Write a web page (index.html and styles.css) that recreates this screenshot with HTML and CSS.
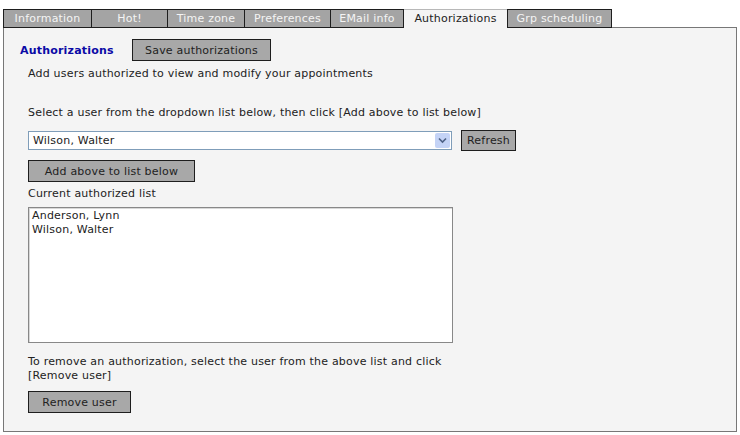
FILE: index.html
```
<!DOCTYPE html>
<html lang="en">
<head>
    <meta charset="UTF-8">
    <title>Authorizations</title>
    <link rel="stylesheet" href="styles.css">
</head>
<body>
    <!-- Tab strip -->
    <div class="tabs">
        <div class="tab tab-info">Information</div>
        <div class="tab tab-hot">Hot!</div>
        <div class="tab tab-tz">Time zone</div>
        <div class="tab tab-pref">Preferences</div>
        <div class="tab tab-mail">EMail info</div>
        <div class="tab tab-auth active">Authorizations</div>
        <div class="tab tab-grp">Grp scheduling</div>
    </div>

    <!-- Authorizations panel -->
    <div class="panel">
        <div class="head-row">
            <h2 class="title">Authorizations</h2>
            <button class="btn btn-save">Save authorizations</button>
        </div>
        <div class="body">
            <p class="intro">Add users authorized to view and modify your appointments</p>
            <p class="hint">Select a user from the dropdown list below, then click [Add above to list below]</p>

            <div class="select-row">
                <div class="select">
                    <span class="select-value">Wilson, Walter</span>
                    <span class="select-arrow">
                        <svg width="9" height="7" viewBox="0 0 9 7"><path d="M1 1.5 L4.5 5 L8 1.5" fill="none" stroke="#4d6185" stroke-width="1.6"/></svg>
                    </span>
                </div>
                <button class="btn btn-refresh">Refresh</button>
            </div>

            <button class="btn btn-add">Add above to list below</button>

            <p class="label">Current authorized list</p>
            <div class="listbox">
                <div class="list-item">Anderson, Lynn</div>
                <div class="list-item">Wilson, Walter</div>
            </div>

            <p class="remove-hint">To remove an authorization, select the user from the above list and click<br>[Remove user]</p>
            <button class="btn btn-remove">Remove user</button>
        </div>
    </div>
</body>
</html>
```
FILE: styles.css
```
/* Page */
body {
    margin: 0;
    padding: 9px 3px 0 3px;
    background: #ffffff;
    font-family: "DejaVu Sans", Verdana, sans-serif;
    font-size: 11px;
    letter-spacing: 0.2px;
    color: #222222;
}

p {
    margin: 0;
    line-height: 14px;
}

/* Tabs */
.tabs {
    display: flex;
    position: relative;
    z-index: 1;
    margin-bottom: -1px;
}

.tab {
    height: 17px;
    line-height: 17px;
    border: 1px solid #1e1e1e;
    border-left-width: 0;
    background: #a4a4a4;
    color: #f4f4f4;
    text-align: center;
    font-size: 11px;
}

.tab-info { width: 87px; border-left-width: 1px; }
.tab-hot { width: 75px; }
.tab-tz { width: 76px; }
.tab-pref { width: 85px; }
.tab-mail { width: 72px; }
.tab-auth { width: 103px; }
.tab-grp { width: 103px; border-left-width: 1px; }

.tab.active {
    background: #f4f4f4;
    color: #222222;
    border-color: #b8b8b8;
    border-left-width: 0;
    border-right-width: 0;
    border-bottom-color: #f4f4f4;
}

/* Panel */
.panel {
    height: 376px;
    border: 1px solid #777777;
    background: #f4f4f4;
    padding: 11px 16px 16px 16px;
}

.head-row {
    display: flex;
    align-items: center;
    gap: 17px;
}

.title {
    margin: 0;
    font-size: 11px;
    font-weight: bold;
    color: #0a0aa6;
    width: 95px;
}

.body {
    padding-left: 8px;
}

/* Buttons */
.btn {
    display: block;
    height: 22px;
    padding: 0 8px;
    border: 1px solid #1e1e1e;
    background: #a8a8a8;
    color: #222222;
    font-family: "DejaVu Sans", Verdana, sans-serif;
    font-size: 11px;
    letter-spacing: 0.2px;
}

.btn-save { width: 139px; }
.btn-refresh { width: 55px; height: 21px; padding: 0; }
.btn-add { width: 167px; margin-top: 9px; }
.btn-remove { width: 103px; margin-top: 8px; }

.intro { margin-top: 6px; }
.hint { margin-top: 25px; }

/* Dropdown */
.select-row {
    display: flex;
    align-items: center;
    gap: 9px;
    margin-top: 10px;
}

.select {
    display: flex;
    align-items: center;
    justify-content: space-between;
    width: 422px;
    height: 17px;
    border: 1px solid #7f9db9;
    background: #ffffff;
}

.select-value {
    padding-left: 4px;
}

.select-arrow {
    display: flex;
    align-items: center;
    justify-content: center;
    width: 15px;
    height: 15px;
    margin-right: 1px;
    background: #c4d3f6;
    border-radius: 2px;
}

/* List */
.label { margin-top: 5px; }

.listbox {
    width: 420px;
    height: 133px;
    margin-top: 6px;
    border: 1px solid #888888;
    box-shadow: inset 1px 1px 0 #d8d8d8;
    background: #ffffff;
    padding: 1px 0 0 3px;
}

.list-item {
    line-height: 14px;
}

.remove-hint { margin-top: 12px; }
```
